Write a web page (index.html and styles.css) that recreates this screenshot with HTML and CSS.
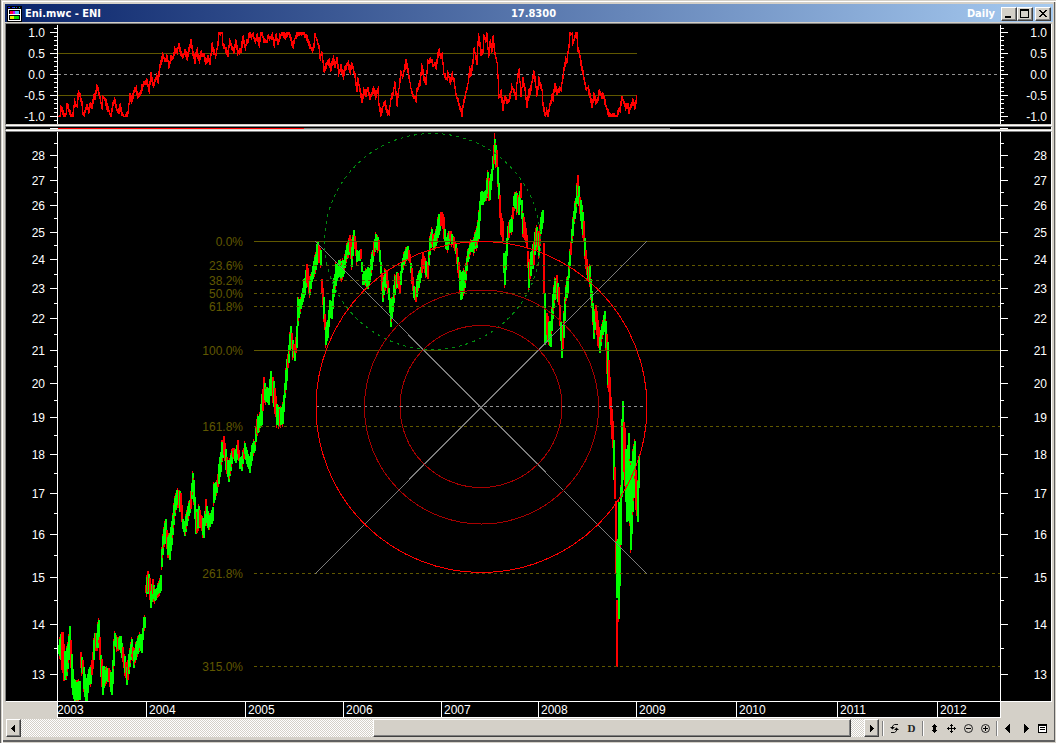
FILE: index.html
```html
<!DOCTYPE html>
<html lang="en">
<head>
<meta charset="utf-8">
<title>Eni.mwc - ENI</title>
<link rel="stylesheet" href="styles.css">
</head>
<body>
<main class="window">
  <header class="titlebar">
    <div class="caption">
      <svg class="app-icon" viewBox="0 0 16 16" aria-hidden="true" shape-rendering="crispEdges">
        <path fill="#000" d="M0 0h15v16H0z"/><path fill="#22f" d="M1 1h2v1H1zM5 1h2v1H5zM9 1h1v1H9z"/><path fill="#0aa" d="M7 1h1v1H7zM12 1h1v1h-1z"/>
        <path fill="#fff" d="M1 3h13v12H1z"/><path fill="#000" d="M2 4h11v4H2zM2 9h11v5H2z"/>
        <path fill="#f03" d="M3 5h4v3H3z"/><path fill="#c0f" d="M6 5h2v3H6z"/><path fill="#5bf" d="M8 5h4v3H8z"/>
        <path fill="#ee0" d="M3 10h4v3H3z"/><path fill="#0d0" d="M7 10h5v3H7z"/>
      </svg>
      <h1 class="title">Eni.mwc - ENI</h1>
    </div>
    <span class="quote">17.8300</span>
    <div class="caption-tools">
      <span class="period">Daily</span>
      <div class="caption-buttons">
        <button class="cap" aria-label="Minimize"><svg viewBox="0 0 12 10" shape-rendering="crispEdges"><path d="M2 7h6v2H2z"/></svg></button>
        <button class="cap" aria-label="Maximize"><svg viewBox="0 0 12 10" shape-rendering="crispEdges"><path fill-rule="evenodd" d="M1 0h9v9H1zM2 2v6h7V2z"/></svg></button>
        <button class="cap close" aria-label="Close"><svg viewBox="0 0 12 10" shape-rendering="crispEdges"><path d="M2 1h2v1h1v1h2V2h1V1h2v1H9v1H8v1H7v1h1v1h1v1h1v1H8V7H7V6H5v1H4v1H2V7h1V6h1V5h1V4H4V3H3V2H2z"/></svg></button>
      </div>
    </div>
  </header>

  <section class="panel indicator" aria-label="Correlation indicator">
    <div class="axis axis-left" id="ind-left"></div>
    <svg class="plot" viewBox="58 24 942 100" preserveAspectRatio="none" shape-rendering="crispEdges">
      <path class="fib" d="M58 53.5H637M58 95.5H637"/>
      <path class="zero" d="M58 74.5H1000"/>
      <path class="osc" id="osc"/>
    </svg>
    <div class="axis axis-right" id="ind-right"></div>
  </section>

  <div class="splitter" role="separator"><span class="split-edge"></span><span class="split-red"></span><span class="split-gray"></span><span class="split-rest"></span><span class="split-end"></span></div>

  <section class="panel price" aria-label="ENI price">
    <div class="axis axis-left" id="price-left"></div>
    <div class="plot-wrap" id="price-plot">
      <svg class="plot" viewBox="58 132 942 569" preserveAspectRatio="none" shape-rendering="crispEdges">
        <g id="bars"></g>
        <path class="fib" d="M254 241.5H1000M254 350.5H1000"/>
        <path class="fib dashed" d="M254 265.5H1000M254 280.5H1000M254 293.5H1000M254 306.5H1000M254 426.5H1000M254 573.5H1000M254 666.5H1000"/>
        <path class="mid" d="M316 406.5H647"/>
        <path class="ray" d="M315 241L647 574M315 574L647 241"/>
        <circle class="cycle" cx="432.5" cy="241.5" r="108"/>
        <circle class="ring outer" cx="481.5" cy="407" r="165.5"/>
        <circle class="ring" cx="481.5" cy="407" r="117"/>
        <circle class="ring" cx="481" cy="406.5" r="81"/>
      </svg>
    </div>
    <div class="axis axis-right" id="price-right"></div>
  </section>

  <div class="dates"><span class="corner"></span><div class="years" id="years"></div><span class="corner"></span></div>

  <footer class="footer">
    <div class="scroll">
      <button class="sbtn" aria-label="Scroll left"><svg class="glyph" viewBox="0 0 15 15" shape-rendering="crispEdges"><path d="M8 4v7h-1v-1h-1v-1H5V8H4V7h1V6h1V5h1V4z"/></svg></button>
      <span class="track"></span>
      <button class="thumb" aria-label="Scroll position"></button>
      <span class="track short"></span>
      <button class="sbtn" aria-label="Scroll right"><svg class="glyph" viewBox="0 0 15 15" shape-rendering="crispEdges"><path d="M5 4v7h1v-1h1v-1h1V8h1V7H8V6H7V5H6V4z"/></svg></button>
    </div>
    <nav class="tools" aria-label="Chart tools">
      <span class="sep"></span>
      <button class="tool" aria-label="Refresh"><svg class="glyph" viewBox="0 0 15 15"><path fill="none" stroke="#111" d="M11 3.500H7.500L5.500 5v2M4 11.500h3.500L9.500 10V8"/><path d="M3 6h5L5.500 8.500zM7 9h5L9.500 6.500z"/></svg></button>
      <button class="tool letter">D</button>
      <span class="sep"></span>
      <button class="tool" aria-label="Scale vertically"><svg class="glyph" viewBox="0 0 15 15" shape-rendering="crispEdges"><path d="M7 3h1v1h1v1h1v1H9v3h1v1H9v1H8v1H7v-1H6v-1H5V9h1V6H5V5h1V4h1z"/></svg></button>
      <button class="tool" aria-label="Move"><svg class="glyph" viewBox="0 0 15 15" shape-rendering="crispEdges"><path d="M7 3h1v1h1v1H8v2h2V6h1v1h1v1h-1v1h-1V8H8v2h1v1H8v1H7v-1H6v-1h1V8H5v1H4V8H3V7h1V6h1v1h2V5H6V4h1z"/></svg></button>
      <button class="tool" aria-label="Zoom out"><svg class="glyph" viewBox="0 0 15 15"><circle cx="7.500" cy="7.500" r="4" fill="none" stroke="#222"/><path d="M5 7h5v1H5z"/></svg></button>
      <button class="tool" aria-label="Zoom in"><svg class="glyph" viewBox="0 0 15 15"><circle cx="7.500" cy="7.500" r="4" fill="none" stroke="#222"/><path d="M5 7h5v1H5zM7 5h1v5H7z"/></svg></button>
      <span class="sep"></span>
      <button class="tool" aria-label="Previous"><svg class="glyph" viewBox="0 0 15 15" shape-rendering="crispEdges"><path d="M9 3v9H8v-1H7v-1H6V9H5V8H4V7h1V6h1V5h1V4h1V3z"/></svg></button>
      <button class="tool" aria-label="Next"><svg class="glyph" viewBox="0 0 15 15" shape-rendering="crispEdges"><path d="M6 3v9h1v-1h1v-1h1V9h1V8h1V7h-1V6H9V5H8V4H7V3z"/></svg></button>
      <button class="tool" aria-label="Chart list"><svg class="glyph" viewBox="0 0 15 15" shape-rendering="crispEdges"><path fill="#fff" d="M4 3h8v8H4z"/><path fill-rule="evenodd" d="M3 3h9v9H3zM4 5v6h7V5zM5 6h5v1H5zM5 8h5v1H5z"/></svg></button>
    </nav>
  </footer>
</main>
<script src="chart.js"></script>
</body>
</html>
```
FILE: styles.css
```css
* { box-sizing: border-box; }
body { margin: 0; height: 100vh; background: #d4d0c8; font: 12px/14px "Liberation Sans", Arial, sans-serif; overflow: hidden; }
button { margin: 0; padding: 0; font: inherit; color: #000; background: #d4d0c8; border: 0; }
svg { display: block; }

.window { height: 100vh; display: flex; flex-direction: column; padding: 4px 3px 6px 5px; background: #d4d0c8; box-shadow: inset 1px 0 #606060, inset 2px 1px #d4d0c8, inset 3px 2px #fff, inset -1px -1px #d4d0c8, inset -2px -3px #606060; }

.titlebar { display: grid; grid-template-columns: 1fr auto 1fr; align-items: center; height: 18px; flex: none; padding: 0 2px; margin-bottom: 1px; color: #fff; background: linear-gradient(90deg, #0a246a, #a6caf0); font: bold 11px/18px "DejaVu Sans Condensed", "DejaVu Sans", sans-serif; }
.caption { display: flex; align-items: center; gap: 2px; }
.app-icon { width: 16px; height: 16px; }
.title { margin: 0; font: inherit; }
.title, .quote, .period { padding-top: 1px; }
.quote { padding-left: 9px; }
.caption-tools { display: flex; justify-content: flex-end; align-items: center; gap: 6px; }
.caption-buttons { display: flex; }
.cap { width: 16px; height: 14px; border: 1px solid; border-color: #fff #404040 #404040 #fff; box-shadow: inset -1px -1px #808080; padding: 1px; }
.cap svg { width: 12px; height: 10px; }
.close { margin-left: 2px; }

.panel { display: grid; grid-template-columns: 52px 1fr 51px; margin-right: 1px; background: #000; border: 1px solid; border-color: #808080 #fff #fff #808080; }
.indicator { flex: 0 0 103px; box-shadow: inset 0 -1px #d4d0c8; padding-bottom: 1px; }
.price { flex: 1; min-height: 0; }
.plot { width: 100%; height: 100%; min-width: 0; overflow: hidden; }
.plot-wrap { position: relative; min-width: 0; min-height: 0; overflow: hidden; }
.axis { position: relative; overflow: hidden; color: #fff; }
.axis-left { border-right: 1px solid #fff; }
.axis-right { border-left: 1px solid #fff; }
.indicator .axis { margin-top: 1px; }
.tick { position: absolute; height: 1px; width: 3px; background: #fff; }
.tick.major { width: 7px; }
.axis-left .tick { right: 0; }
.axis-right .tick { left: 0; }
.axis-label { position: absolute; margin-top: -6px; }
.axis-left .axis-label { right: 12px; }
.axis-right .axis-label { right: 4px; }

.fib { stroke: #605800; fill: none; }
.dashed { stroke-dasharray: 3 3; }
.zero, .mid { stroke: #909090; stroke-dasharray: 3 3; fill: none; }
.osc { stroke: #f00; fill: none; }
.up { stroke: #0f0; fill: none; }
.down { stroke: #f00; fill: none; }
.body { stroke-width: 2; }
.ray { stroke: #7c7c7c; fill: none; }
.cycle { stroke: #008a10; stroke-dasharray: 3 4; fill: none; }
.ring { stroke: #a80000; fill: none; }
.ring.outer { stroke: #f00; }
.fib-label { position: absolute; width: 80px; margin-top: -6px; margin-left: -81px; text-align: right; color: #605800; }

.splitter { flex: none; display: grid; grid-template-columns: 52px 246fr 366fr 330fr 51px; height: 5px; padding-top: 1px; margin-right: 1px; background: #000; border: 1px solid; border-color: #808080 #fff #fff #808080; box-shadow: inset 0 -1px #d4d0c8; padding-bottom: 1px; }
.splitter span { height: 1px; }
.split-edge { border-right: 8px solid #fff; }
.split-red { background: #f00; }
.split-gray { background: #808080; }
.split-end { border-left: 8px solid #fff; }

.dates { flex: none; display: grid; grid-template-columns: 52px 1fr 51px; height: 16px; margin-right: 1px; }
.years { position: relative; overflow: hidden; color: #fff; background: #000; border-bottom: 1px solid #fff; border-right: 1px solid #fff; border-left: 1px solid #fff; }
.year { position: absolute; top: 0; bottom: 0; padding-left: 2px; line-height: 16px; border-left: 1px solid #fff; }
.year.first { margin-left: -1px; padding-left: 0; border-left: 0; }

.footer { flex: none; display: flex; height: 18px; margin-top: 1px; }
.scroll { flex: 1; display: flex; margin-left: 1px; }
.sbtn { width: 15px; }
.sbtn, .thumb { border: 1px solid; border-color: #fff #404040 #404040 #fff; box-shadow: inset -1px -1px #808080; }
.sbtn { display: grid; place-items: center; }
.glyph { width: 15px; height: 15px; flex: none; }
.track { flex: 353; background: repeating-conic-gradient(#fff 0 25%, #d4d0c8 0 50%) 0 0 / 2px 2px; }
.thumb { flex: 478; }
.track.short { flex: 13; }
.tools { display: flex; align-items: center; padding: 0 2px 0 1px; }
.tool { width: 17px; height: 17px; display: grid; place-items: center; }
.letter { font: bold 11px/15px "Liberation Serif", serif; color: #222; }
.sep { width: 2px; height: 15px; margin: 0 2px; background: linear-gradient(90deg, #808080 50%, #fff 50%); }
```
FILE: chart.js
```js
// Oscillator samples: x, y pairs in plot units.
const OSC = [58,116,60,116,61,107,62,109,64,116,66,114,67,105,69,109,71,116,73,115,74,106,75,101,76,105,77,105,78,96,79,92,80,95,82,104,83,114,85,112,87,105,89,111,90,105,92,106,94,96,95,98,97,86,99,92,100,96,102,108,103,98,105,98,107,106,109,110,111,116,113,104,115,100,117,109,119,110,120,104,122,113,124,116,126,116,128,111,130,96,132,100,134,91,136,88,138,96,140,94,142,87,144,84,147,80,149,91,151,74,153,85,155,80,157,75,158,80,160,67,162,58,163,54,165,61,167,56,169,66,171,58,173,57,175,48,177,52,179,44,181,54,183,57,185,50,187,57,190,46,191,40,193,53,195,60,197,50,199,60,201,53,204,56,206,62,208,58,210,63,212,45,214,52,216,55,218,42,219,33,222,33,223,45,225,48,228,54,230,40,232,47,234,51,236,42,238,53,241,50,243,38,245,47,247,42,250,33,251,37,253,33,255,41,257,35,259,44,261,33,262,33,264,40,267,42,268,35,270,38,272,34,274,44,276,36,278,43,280,35,283,33,285,36,287,33,289,33,291,40,293,46,295,38,297,33,300,33,302,33,304,33,306,36,308,40,310,46,312,50,314,46,315,34,317,40,319,46,320,57,322,52,324,70,326,65,329,61,331,70,333,58,335,65,337,59,339,73,341,66,343,76,345,69,348,63,350,71,352,64,355,75,357,90,358,79,362,100,364,90,366,94,368,87,370,98,372,93,374,88,376,97,378,89,379,104,381,115,383,106,385,102,387,112,389,112,391,98,393,93,395,83,397,104,399,88,401,72,403,76,406,62,408,69,409,76,411,88,413,95,416,99,417,90,420,82,422,66,424,77,426,82,428,62,431,59,433,64,436,66,439,49,441,57,442,53,444,74,447,78,448,72,450,82,452,74,454,80,456,94,458,100,460,106,462,115,463,107,466,92,468,83,470,68,471,73,473,62,474,48,477,62,478,43,479,36,481,53,483,50,484,35,486,40,487,33,488,48,489,55,490,41,492,49,493,38,495,53,497,62,498,76,499,97,501,92,503,108,505,96,507,101,509,101,511,91,512,86,514,91,516,96,517,82,519,70,521,94,523,80,525,90,527,105,529,90,530,94,532,82,534,72,536,86,537,95,539,79,542,90,543,104,545,115,547,110,548,116,550,105,552,95,553,98,555,85,557,92,559,90,561,88,562,82,564,70,566,58,567,61,569,44,570,33,572,33,573,42,575,37,577,33,578,48,580,56,582,68,584,77,586,88,588,88,590,95,592,105,594,95,596,101,598,98,599,90,602,98,603,93,605,102,607,108,609,115,611,116,614,116,617,116,619,109,620,110,622,97,624,102,626,108,628,104,629,111,631,106,633,99,635,106,637,97];

// Price ranges: x, high, low triples in plot units.
const PRICE = [58,645,653,60,632,662,62,628,680,64,645,684,66,648,680,69,624,655,71,650,690,73,680,701,76,682,701,79,678,701,80,650,670,82,660,675,84,670,701,86,678,701,88,668,685,90,667,684,92,650,670,94,632,652,96,630,650,98,617,645,100,655,680,102,665,700,104,668,682,108,668,682,111,675,697,113,640,670,114,632,648,117,637,650,120,636,652,123,652,668,126,665,685,129,648,668,131,640,655,133,652,668,136,640,655,139,633,650,141,636,652,143,616,632,144,618,628,145,585,592,147,570,595,149,578,600,150,592,608,152,577,595,154,590,602,157,585,596,160,575,594,161,545,570,163,528,545,165,520,545,167,535,555,169,530,560,171,520,545,174,495,520,176,489,505,178,488,508,180,490,515,182,518,530,184,522,537,186,510,525,189,498,515,192,470,495,193,478,505,195,508,537,198,507,530,200,514,528,203,518,540,205,500,515,207,510,530,209,515,528,212,505,520,213,482,505,216,482,492,219,455,480,221,443,465,223,437,455,225,450,472,228,463,483,230,455,470,232,447,457,235,450,465,237,440,455,239,458,470,241,455,470,244,443,455,246,450,465,249,460,472,251,445,460,254,440,450,256,418,435,259,412,430,261,395,425,263,377,400,265,388,402,268,385,405,270,372,393,273,380,408,276,405,425,279,408,426,282,405,425,284,380,400,286,360,380,288,343,362,290,327,340,292,340,358,294,350,360,296,325,350,297,297,325,300,298,310,303,280,300,304,277,295,306,263,285,309,280,296,312,265,278,314,258,275,316,245,265,317,242,262,320,250,265,321,278,295,323,295,320,324,312,330,325,325,345,327,320,338,329,300,318,331,300,318,333,278,300,335,265,285,338,260,275,341,262,280,343,260,275,346,245,258,349,235,255,351,245,266,353,227,245,356,250,262,360,250,260,362,272,286,365,268,285,367,268,290,369,265,285,372,248,262,375,232,250,378,240,250,380,260,275,382,280,305,384,270,290,386,268,285,388,288,300,390,305,331,392,295,312,394,275,295,397,272,285,399,280,295,401,262,275,404,250,262,407,246,260,409,255,262,411,268,285,413,285,298,415,285,302,417,275,292,420,268,278,422,252,268,425,262,275,427,262,280,429,238,255,431,228,242,433,238,250,435,230,248,438,212,235,441,212,222,443,213,240,445,240,248,447,232,250,449,230,240,452,235,245,455,242,255,458,262,280,460,272,302,462,272,295,464,270,290,467,250,262,470,240,252,473,238,252,475,230,245,476,228,248,478,210,238,480,190,205,482,192,205,485,190,200,487,172,198,489,180,202,491,168,180,493,145,165,494,140,160,496,150,170,498,180,200,500,210,235,502,222,242,503,252,275,504,265,287,505,250,270,507,225,240,509,220,235,511,215,232,513,195,206,515,193,210,518,195,215,520,183,200,522,210,238,524,220,240,526,235,250,528,262,288,530,250,275,533,240,265,535,225,245,538,230,256,540,215,235,542,208,225,543,240,300,544,290,350,545,310,345,546,312,335,548,320,345,550,318,350,552,290,320,554,278,300,556,275,300,558,285,305,560,320,345,561,335,359,563,310,340,565,285,300,567,275,295,569,250,265,571,230,245,573,210,225,575,195,215,577,172,200,579,195,215,581,205,230,583,220,245,585,250,270,587,265,280,589,265,285,591,290,310,593,312,340,595,305,325,597,318,345,599,335,355,601,325,338,604,310,330,606,328,375,608,355,395,610,395,430,612,420,450,613,440,480,614,468,505,615,500,580,616,540,610,617,530,605,618,500,620,619,495,600,620,470,560,621,405,500,622,402,480,624,425,490,626,450,530,628,430,510,630,460,555,632,445,520,634,440,480,635,465,515,637,480,525,638,450,495];

let seed = 7;
const rnd = () => (seed = (seed * 16807) % 2147483647) / 2147483647;
const byId = (id) => document.getElementById(id);

// One vertical stroke per column, reaching to the next sample.
let osc = "";
let last = 116;
for (let i = 0; i + 3 < OSC.length; i += 2) {
  const [x0, y0, x1, y1] = OSC.slice(i, i + 4);
  for (let x = x0; x < x1; x++) {
    const y = y0 + (y1 - y0) * (x + 1 - x0) / (x1 - x0);
    const top = Math.max(32, Math.min(last, y) - rnd() * 3);
    const end = Math.min(117, Math.max(last, y) + 1 + rnd() * 3);
    osc += `M${x + .5} ${Math.round(top)}V${Math.round(end)}`;
    last = y;
  }
}
byId("osc").setAttribute("d", osc);

// Price columns are stacked in time order, so later ones cover earlier ones.
const stroke = (cls, x, top, end) => `<path class="${cls}" d="M${x} ${Math.round(top)}V${Math.round(end)}"/>`;
let bars = stroke("down", 494, 133, 160) + stroke("down body", 617, 600, 667);
for (let i = 0; i < PRICE.length; i += 3) {
  const [x0, h0, l0, x1 = x0 + 1, h1 = h0, l1 = l0] = PRICE.slice(i, i + 6);
  const falling = h1 + l1 > h0 + l0 + 8;
  for (let x = x0; x < x1; x++) {
    const t = (x - x0) / (x1 - x0);
    const hi = h0 + (h1 - h0) * t, lo = l0 + (l1 - l0) * t, len = lo - hi;
    const a = hi + rnd() * len * .2 - 1, b = lo - rnd() * len * .2 + 1;
    const redBar = rnd() < (falling ? .55 : .08);
    if (redBar) {
      bars += stroke("down body", x + 1, a, b);
    } else {
      if (rnd() < .4) bars += stroke("down", x + .5, a - 2, b + 3);
      bars += stroke("up body", x + 1, a, b);
    }
  }
}
byId("bars").innerHTML = bars;

const add = (parent, cls, style, text = "") => {
  const el = document.createElement("span");
  el.className = cls;
  Object.assign(el.style, style);
  el.textContent = text;
  parent.append(el);
};
const mark = (ids, frac, text) => ids.forEach((id) => {
  const top = `${frac * 100}%`;
  add(byId(id), text ? "tick major" : "tick", { top });
  if (text) add(byId(id), "axis-label", { top }, text);
});

for (let v = -11; v <= 11; v++) {
  mark(["ind-left", "ind-right"], (49 - v * 4.2) / 99, v % 5 === 0 ? (v / 10).toFixed(1) : "");
}
for (let p = 13; p <= 28.5; p += .5) {
  const y = 542 - 676.4 * Math.log(p / 13);
  mark(["price-left", "price-right"], y / 569, Number.isInteger(p) ? String(p) : "");
}
[["0.0%", 241], ["23.6%", 265], ["38.2%", 280], ["50.0%", 293], ["61.8%", 306], ["100.0%", 350], ["161.8%", 426], ["261.8%", 573], ["315.0%", 666]].forEach(([text, y]) => {
  add(byId("price-plot"), "fib-label", { left: `${(244 - 58) / 942 * 100}%`, top: `${(y - 132) / 569 * 100}%` }, text);
});
[57, 146, 245, 343, 441, 538, 636, 736, 837, 937].forEach((x, i) => {
  add(byId("years"), i ? "year" : "year first", { left: `${Math.max(0, x - 58) / 942 * 100}%` }, String(2003 + i));
});
```
